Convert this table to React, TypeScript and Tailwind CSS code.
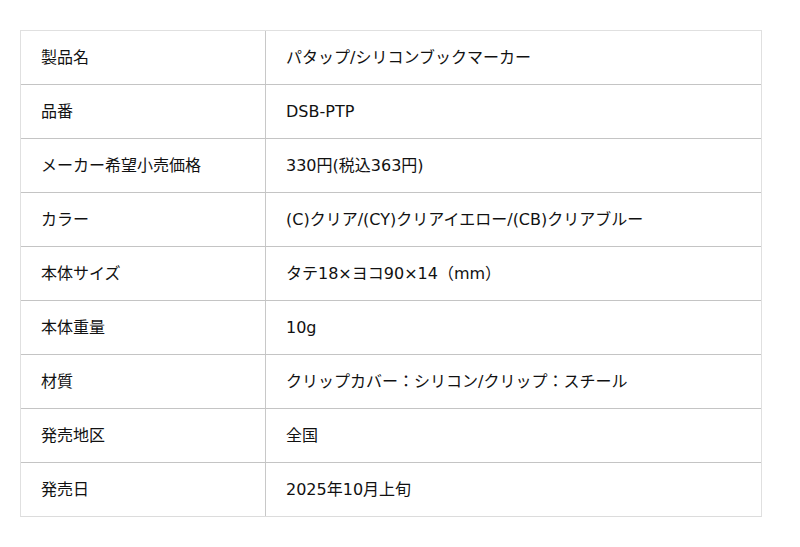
import React from "react";

const rows: [string, string][] = [
  ["製品名", "パタップ/シリコンブックマーカー"],
  ["品番", "DSB-PTP"],
  ["メーカー希望小売価格", "330円(税込363円)"],
  ["カラー", "(C)クリア/(CY)クリアイエロー/(CB)クリアブルー"],
  ["本体サイズ", "タテ18×ヨコ90×14（mm）"],
  ["本体重量", "10g"],
  ["材質", "クリップカバー：シリコン/クリップ：スチール"],
  ["発売地区", "全国"],
  ["発売日", "2025年10月上旬"],
];

export default function App() {
  return (
    <div
      className="w-[800px] h-[547px] bg-white pt-[30px] pl-[20px]"
      style={{ fontFamily: '"DejaVu Sans", "Noto Sans CJK JP", sans-serif' }}
    >
      <div className="w-[742px] border-x border-b border-x-[#e0e0e0] border-b-[#dcdcdc]">
        {rows.map(([k, v], i) => (
          <div
            key={i}
            className={
              "flex h-[54px] items-center text-[16px] text-[#111] border-t " +
              (i > 0 ? "border-[#c4c4c4]" : "border-[#e0e0e0]")
            }
          >
            <div className="w-[245px] h-full flex items-center pl-[20px] border-r border-[#c8c8c8]">
              {k}
            </div>
            <div className="flex-1 pl-[20px]">{v}</div>
          </div>
        ))}
      </div>
    </div>
  );
}
